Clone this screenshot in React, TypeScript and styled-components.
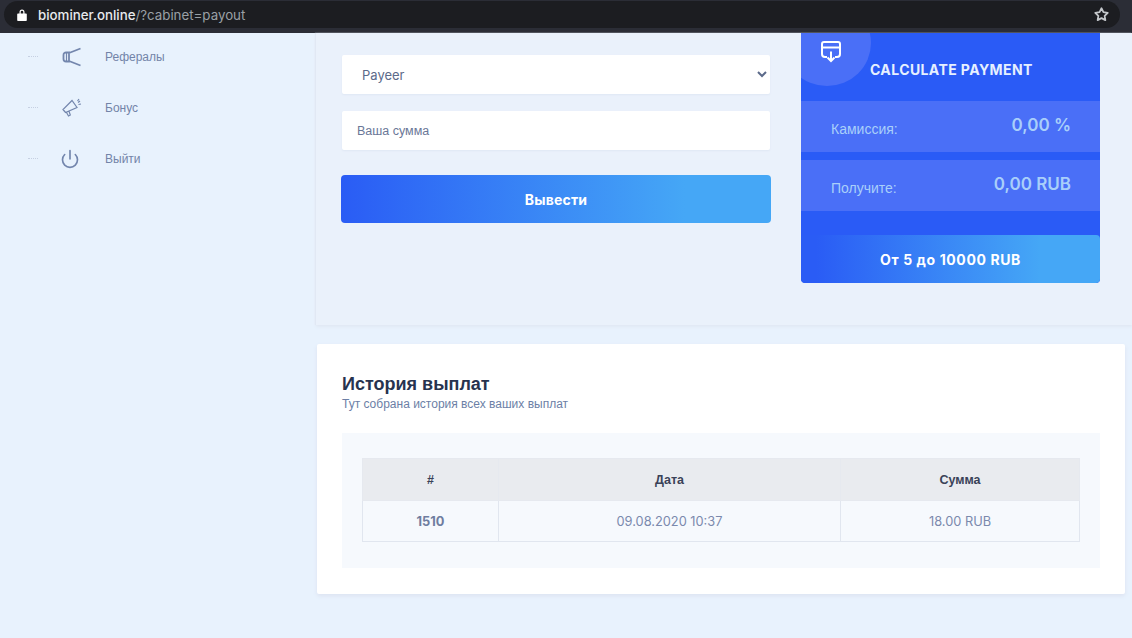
import React from "react";
import styled, { createGlobalStyle } from "styled-components";
import { FiStar, FiPower } from "react-icons/fi";

const GlobalStyle = createGlobalStyle`
  html, body {
    margin: 0;
    height: 100%;
    background: #e8f2fd;
    font-family: "Liberation Sans", Arial, sans-serif;
    overflow: hidden;
  }
  * { box-sizing: border-box; }
`;

const payoutRows = [
  { label: "Камиссия:", value: "0,00 %" },
  { label: "Получите:", value: "0,00 RUB" },
];

export default function App() {
  return (
    <Page>
      <GlobalStyle />
      <TopBar>
        <UrlPill>
          <svg width="12" height="14" viewBox="0 0 12 14" fill="#fff">
            <path d="M3.500 5.500V4a2.500 2.500 0 0 1 5 0v1.500H10a.8.800 0 0 1 .8.800v6a.8.800 0 0 1-.8.800H2a.8.800 0 0 1-.8-.800v-6a.8.800 0 0 1 .8-.800zM4.700 5.500h2.600V4a1.300 1.300 0 0 0-2.600 0z" fillRule="evenodd" />
          </svg>
          <Url>
            <b>biominer.online</b>/?cabinet=payout
          </Url>
          <Star>
            <FiStar size={15} strokeWidth={2.8} />
          </Star>
        </UrlPill>
      </TopBar>

      <Body>
        <Sidebar>
          <NavItem>
            <Dash />
            <NavIcon>
              <svg width="20" height="20" viewBox="0 0 20 20" fill="none" stroke="currentColor" strokeWidth="1.8">
                <path d="M7 5.500H4a2.500 2.500 0 0 0-2.500 2.500v4A2.500 2.500 0 0 0 4 14.500h3zM7 6L18.500 1.500M7 14l11.500 4.500" />
                <path d="M4.500 5.500v9" strokeWidth="1.200" />
              </svg>
            </NavIcon>
            <NavLabel>Рефералы</NavLabel>
          </NavItem>
          <NavItem>
            <Dash />
            <NavIcon>
              <svg width="20" height="20" viewBox="0 0 20 20" fill="none" stroke="currentColor" strokeWidth="1.200">
                <path d="M1 11.500l2.500 3L15 9.500 10 2.500zM4.500 14.500l2 3.500 1.800-1-1.300-3.800M15.500 3l1.500-2M16.500 6.500l2.500-.5M16 4.500l2-1.500" />
              </svg>
            </NavIcon>
            <NavLabel>Бонус</NavLabel>
          </NavItem>
          <NavItem>
            <Dash />
            <NavIcon>
              <PowerIcon size={20} />
            </NavIcon>
            <NavLabel>Выйти</NavLabel>
          </NavItem>
        </Sidebar>

        <Content>
          <PayoutPanel>
            <PayoutForm>
              <MethodSelect defaultValue="Payeer">
                <option>Payeer</option>
              </MethodSelect>
              <AmountInput placeholder="Ваша сумма" />
              <SubmitButton>Вывести</SubmitButton>
            </PayoutForm>

            <CalcCard>
              <CalcHead>
                <CalcBadge>
                  <svg width="20" height="22" viewBox="0 0 20 22" fill="none" stroke="#fff" strokeWidth="2">
                    <path d="M6 16H4a3 3 0 0 1-3-3V3a2 2 0 0 1 2-2h14a2 2 0 0 1 2 2v10a3 3 0 0 1-3 3h-2M1 6.500h18M10 10.500V20M6.500 16.500L10 20l3.500-3.500" />
                  </svg>
                </CalcBadge>
                <CalcTitle>CALCULATE PAYMENT</CalcTitle>
              </CalcHead>
              {payoutRows.map((row) => (
                <CalcRow key={row.label}>
                  <CalcLabel>{row.label}</CalcLabel>
                  <CalcValue>{row.value}</CalcValue>
                </CalcRow>
              ))}
              <RangeBar>От 5 до 10000 RUB</RangeBar>
            </CalcCard>
          </PayoutPanel>

          <HistoryCard>
            <HistoryTitle>История выплат</HistoryTitle>
            <HistorySub>Тут собрана история всех ваших выплат</HistorySub>
            <TableWrap>
              <Table>
                <thead>
                  <tr>
                    <Th style={{ width: 136 }}>#</Th>
                    <Th style={{ width: 342 }}>Дата</Th>
                    <Th>Сумма</Th>
                  </tr>
                </thead>
                <tbody>
                  <tr>
                    <IdCell>1510</IdCell>
                    <Td>09.08.2020 10:37</Td>
                    <Td>18.00 RUB</Td>
                  </tr>
                </tbody>
              </Table>
            </TableWrap>
          </HistoryCard>
        </Content>
      </Body>
    </Page>
  );
}

const Page = styled.div`
  width: 1132px;
  height: 638px;
  display: flex;
  flex-direction: column;
  overflow: hidden;
`;

const TopBar = styled.header`
  height: 33px;
  flex: none;
  background: #2b2d36;
  padding: 1px 12px 0 4px;
`;

const UrlPill = styled.div`
  height: 27px;
  padding: 0 11px 0 12px;
  border-radius: 14px;
  background: #1c1d21;
  display: flex;
  align-items: center;
  gap: 10px;
  color: #fff;
`;

const Url = styled.span`
  font-family: "Inter", sans-serif;
  font-size: 13.3px;
  color: #9aa0a6;
  b {
    font-weight: 500;
    color: #e8eaed;
  }
`;

const Star = styled.span`
  margin-left: auto;
  display: flex;
  color: #c4c7cb;
`;

const Body = styled.div`
  flex: 1;
  display: flex;
  min-height: 0;
`;

const Sidebar = styled.nav`
  width: 316px;
  flex: none;
  display: flex;
  flex-direction: column;
`;

const NavItem = styled.div`
  height: 51px;
  padding: 0 0 4px 28px;
  display: flex;
  align-items: center;
`;

const Dash = styled.span`
  width: 10px;
  border-top: 1px dotted #c6d0e2;
`;

const NavIcon = styled.span`
  width: 20px;
  margin-left: 24px;
  display: flex;
  color: #7386ad;
`;

const PowerIcon = styled(FiPower)`
  margin-left: -2px;
`;

const NavLabel = styled.span`
  margin-left: 23px;
  font-size: 12px;
  color: #7384a8;
`;

const Content = styled.main`
  flex: 1;
  min-width: 0;
  display: flex;
  flex-direction: column;
`;

const PayoutPanel = styled.section`
  height: 292px;
  flex: none;
  padding: 0 32px 0 25px;
  background: #eaf1fb;
  box-shadow: 0 2px 3px #e1e8f4, -1px 0 1px #e1e8f4;
  display: flex;
  gap: 30px;
  align-items: flex-start;
`;

const PayoutForm = styled.form`
  width: 430px;
  flex: none;
  padding-top: 22px;
  display: flex;
  flex-direction: column;
`;

const MethodSelect = styled.select`
  width: 428px;
  height: 39px;
  margin: 0 1px;
  padding: 0 0 0 16px;
  border: 0;
  border-radius: 2px;
  background: #fff;
  box-shadow: 0 1px 2px #dfe7f4;
  font-family: "Inter", sans-serif;
  font-size: 13px;
  color: #5c6a8a;
`;

const AmountInput = styled.input`
  width: 428px;
  height: 39px;
  margin: 17px 1px 0;
  padding: 0 15px;
  border: 0;
  border-radius: 2px;
  background: #fff;
  box-shadow: 0 1px 2px #dfe7f4;
  font-family: "Liberation Sans", sans-serif;
  font-size: 12.5px;
  &::placeholder {
    color: #6a7797;
    opacity: 1;
  }
`;

const SubmitButton = styled.button`
  width: 100%;
  height: 48px;
  margin-top: 25px;
  border: 0;
  border-radius: 4px;
  background: linear-gradient(90deg, #2a5cf5 0%, #45a7f6 80%);
  color: #fff;
  font-family: "Inter", sans-serif;
  font-size: 14px;
  font-weight: 700;
  letter-spacing: 0.2px;
`;

const CalcCard = styled.aside`
  width: 299px;
  height: 250px;
  flex: none;
  position: relative;
  overflow: hidden;
  border-radius: 0 0 4px 4px;
  background: #2a5bf6;
`;

const CalcHead = styled.div`
  height: 68px;
  padding: 28px 0 0 69px;
`;

const CalcBadge = styled.div`
  position: absolute;
  left: -18px;
  top: -33px;
  width: 88px;
  height: 86px;
  border-radius: 50%;
  background: #4a6ff7;
  padding: 41px 0 0 38px;
`;

const CalcTitle = styled.h3`
  position: relative;
  margin: 0;
  font-family: "Inter", sans-serif;
  font-size: 14px;
  line-height: 18px;
  font-weight: 700;
  letter-spacing: 0.4px;
  color: #e6f0ff;
`;

const CalcRow = styled.div`
  height: 51px;
  margin-bottom: 8px;
  padding: 0 29px 0 30px;
  background: #4a6ff7;
  display: flex;
  justify-content: space-between;
  align-items: center;
`;

const CalcLabel = styled.span`
  padding-top: 4px;
  font-size: 14px;
  color: #a9cffa;
`;

const CalcValue = styled.span`
  margin-top: -4px;
  font-family: "Inter", sans-serif;
  font-size: 17px;
  font-weight: 600;
  color: #a9cffa;
`;

const RangeBar = styled.div`
  position: absolute;
  left: 0;
  right: 0;
  bottom: 0;
  height: 48px;
  border-radius: 4px;
  background: linear-gradient(90deg, #2a5cf5 5%, #45a7f6 80%);
  display: flex;
  align-items: center;
  justify-content: center;
  font-family: "Inter", sans-serif;
  font-size: 14px;
  font-weight: 700;
  letter-spacing: 0.6px;
  color: #fff;
`;

const HistoryCard = styled.section`
  width: 808px;
  height: 250px;
  margin: 19px 0 0 1px;
  padding: 30px 25px 0;
  flex: none;
  border-radius: 2px;
  background: #fff;
  box-shadow: 0 2px 4px #dde3f1;
`;

const HistoryTitle = styled.h2`
  margin: 0;
  font-size: 18px;
  line-height: 21px;
  font-weight: 700;
  color: #27334f;
`;

const HistorySub = styled.p`
  margin: 2px 0 0;
  font-size: 12px;
  line-height: 15px;
  color: #6c7fa6;
`;

const TableWrap = styled.div`
  width: 758px;
  height: 135px;
  margin-top: 21px;
  padding: 25px 20px 0;
  background: #f6f9fd;
`;

const Table = styled.table`
  width: 718px;
  border-collapse: collapse;
  table-layout: fixed;
`;

const Th = styled.th`
  height: 42px;
  padding: 0;
  border: 1px solid #e6e9ef;
  background: #e9ebef;
  font-size: 12.5px;
  font-weight: 700;
  color: #3a4258;
`;

const Td = styled.td`
  height: 41px;
  padding: 0;
  border: 1px solid #e1e6ef;
  background: #f6f9fd;
  text-align: center;
  font-family: "Inter", sans-serif;
  font-size: 12.8px;
  color: #7b89ad;
`;

const IdCell = styled(Td)`
  font-weight: 700;
  color: #6f7da0;
`;
